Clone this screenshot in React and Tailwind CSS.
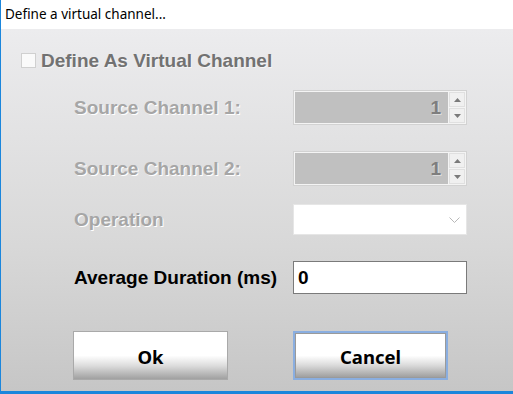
import React from "react";

const lab = "w-[292px] shrink-0 whitespace-nowrap pl-[73px] font-['Liberation_Sans',sans-serif] font-bold text-[19px] leading-none";
const dis = "text-[#a6a6a6] [text-shadow:1px_1px_0_#ffffff]";

function Spin() {
  return (
    <div className="w-[174px] h-[35px] shrink-0 border border-[#d2d2d2] bg-[#f4f4f4] p-[1px] flex">
      <div className="flex-1 bg-[#c0c0c0] flex items-center justify-end pr-[7px]">
        <span className="font-['Liberation_Sans',sans-serif] font-bold text-[19px] leading-none text-[#7e7e7e] [text-shadow:1px_1px_0_#dcdcdc]">1</span>
      </div>
      <div className="w-[16px] ml-[1px] flex flex-col gap-[1px]">
        <div className="flex-1 bg-[#f0f0f0] border border-[#e0e0e0] flex items-center justify-center">
          <svg width="7" height="4" viewBox="0 0 7 4"><path d="M0 4 L3.5 0 L7 4Z" fill="#7a7a7a" /></svg>
        </div>
        <div className="flex-1 bg-[#f0f0f0] border border-[#e0e0e0] flex items-center justify-center">
          <svg width="7" height="4" viewBox="0 0 7 4"><path d="M0 0 L3.5 4 L7 0Z" fill="#7a7a7a" /></svg>
        </div>
      </div>
    </div>
  );
}

function Btn({ children, focused }) {
  return (
    <div
      className={`w-[155px] h-[49px] shrink-0 ${
        focused ? "border-2 border-[#8aaee0]" : "border border-[#a9a9a9]"
      } flex`}
    >
      <div className={`flex-1 flex items-center justify-center pt-[4px] bg-[linear-gradient(to_bottom,#ffffff_0%,#ffffff_50%,#dcdcdc_72%,#a0a0a0_100%)] ${focused ? "border border-[#9a9a9a]" : ""}`}>
        <span className="font-['Noto_Sans',sans-serif] font-bold text-[18.5px] leading-none text-black">{children}</span>
      </div>
    </div>
  );
}

export default function App() {
  return (
    <div className="w-[513px] h-[394px] flex flex-col border-l border-[#1b86dc] border-b-[3px] border-b-[#1b86dc] bg-white overflow-hidden">
      <div className="h-[2px] ml-[150px] bg-[#2b8ae0]" />
      <div className="h-[29px] bg-white flex items-center pl-[4px] -mt-[2px]">
        <span className="font-['Noto_Sans',sans-serif] text-[13.5px] text-black leading-none">Define a virtual channel...</span>
      </div>
      <div className="flex-1 bg-[linear-gradient(to_bottom,#ececee_0%,#d8d8d8_60%,#c6c6c6_100%)] flex flex-col">
        <div className="h-[32px] mt-[15px] flex items-center pl-[20px]">
          <div className="w-[15px] h-[15px] border border-[#d0d0d0] bg-[#fafafa]" />
          <span className="ml-[5px] whitespace-nowrap font-['Liberation_Sans',sans-serif] font-bold text-[19px] leading-none text-[#727272] [text-shadow:1px_1px_0_#f5f5f5]">Define As Virtual Channel</span>
        </div>
        <div className="flex items-center mt-[14px] h-[35px]">
          <span className={`${lab} ${dis}`}>Source Channel 1:</span>
          <Spin />
        </div>
        <div className="flex items-center mt-[26px] h-[35px]">
          <span className={`${lab} ${dis}`}>Source Channel 2:</span>
          <Spin />
        </div>
        <div className="flex items-center mt-[18px] h-[31px]">
          <span className={`${lab} ${dis}`}>Operation</span>
          <div className="w-[174px] h-[31px] shrink-0 bg-white border border-[#e6e6e6] flex items-center justify-end pr-[6px]">
            <svg width="11" height="6" viewBox="0 0 11 6"><path d="M0.5 0.5 L5.5 5.5 L10.5 0.5" fill="none" stroke="#b8b8b8" strokeWidth="1" /></svg>
          </div>
        </div>
        <div className="flex items-center mt-[26px] h-[33px]">
          <span className={`${lab} text-black`}>Average Duration (ms)</span>
          <div className="w-[174px] h-[33px] shrink-0 bg-white border border-[#7a7a7a] flex items-center pl-[4px]">
            <span className="font-['Liberation_Sans',sans-serif] font-bold text-[19px] leading-none text-black">0</span>
          </div>
        </div>
        <div className="flex mt-[37px] pl-[72px] gap-[65px]">
          <Btn>Ok</Btn>
          <Btn focused>Cancel</Btn>
        </div>
      </div>
    </div>
  );
}
